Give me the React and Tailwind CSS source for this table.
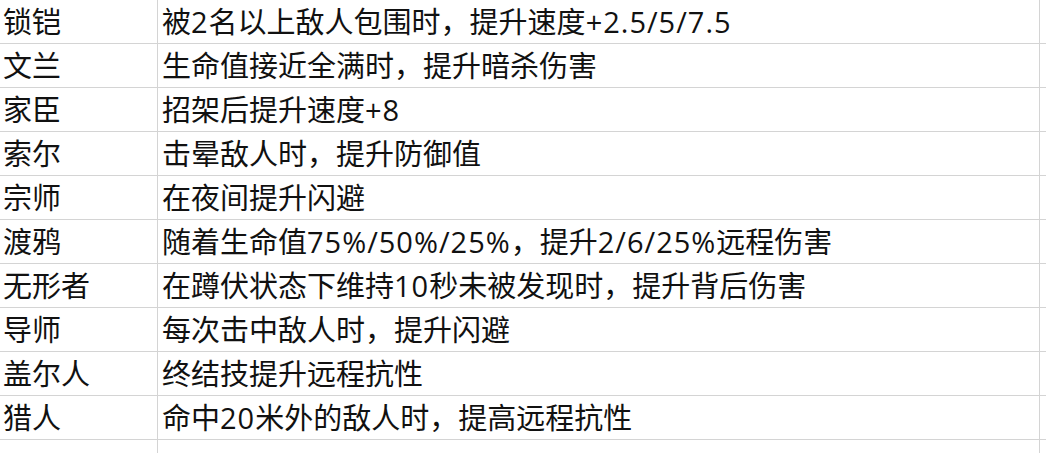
const rows = [
  ["锁铠", "被2名以上敌人包围时，提升速度+2.5/5/7.5"],
  ["文兰", "生命值接近全满时，提升暗杀伤害"],
  ["家臣", "招架后提升速度+8"],
  ["索尔", "击晕敌人时，提升防御值"],
  ["宗师", "在夜间提升闪避"],
  ["渡鸦", "随着生命值75%/50%/25%，提升2/6/25%远程伤害"],
  ["无形者", "在蹲伏状态下维持10秒未被发现时，提升背后伤害"],
  ["导师", "每次击中敌人时，提升闪避"],
  ["盖尔人", "终结技提升远程抗性"],
  ["猎人", "命中20米外的敌人时，提高远程抗性"],
];

// latin runs render a touch wider in the original, so space them out a little
function Desc({ text }) {
  return text.split(/([0-9+.%/]+)/).map((part, i) =>
    i % 2 ? (
      <span key={i} className="tracking-[1px]">{part}</span>
    ) : (
      part
    )
  );
}

export default function App() {
  return (
    <div
      className="w-[1046px] h-[453px] overflow-hidden bg-white text-[#111] text-[29px] leading-none"
      style={{ fontFamily: '"Open Sans", "Noto Sans CJK SC", sans-serif' }}
    >
      {rows.map(([name, desc]) => (
        <div key={name} className="flex h-[44px] border-b border-[#d4d4d4]">
          <div className="w-[158px] shrink-0 flex items-center pl-[3px] border-r border-[#d4d4d4]">{name}</div>
          <div className="w-[882px] shrink-0 flex items-center pl-[4px] border-r border-[#d4d4d4] whitespace-nowrap">
            <Desc text={desc} />
          </div>
        </div>
      ))}
      <div className="flex h-[13px]">
        <div className="w-[158px] shrink-0 border-r border-[#d4d4d4]" />
        <div className="w-[882px] shrink-0 border-r border-[#d4d4d4]" />
      </div>
    </div>
  );
}
